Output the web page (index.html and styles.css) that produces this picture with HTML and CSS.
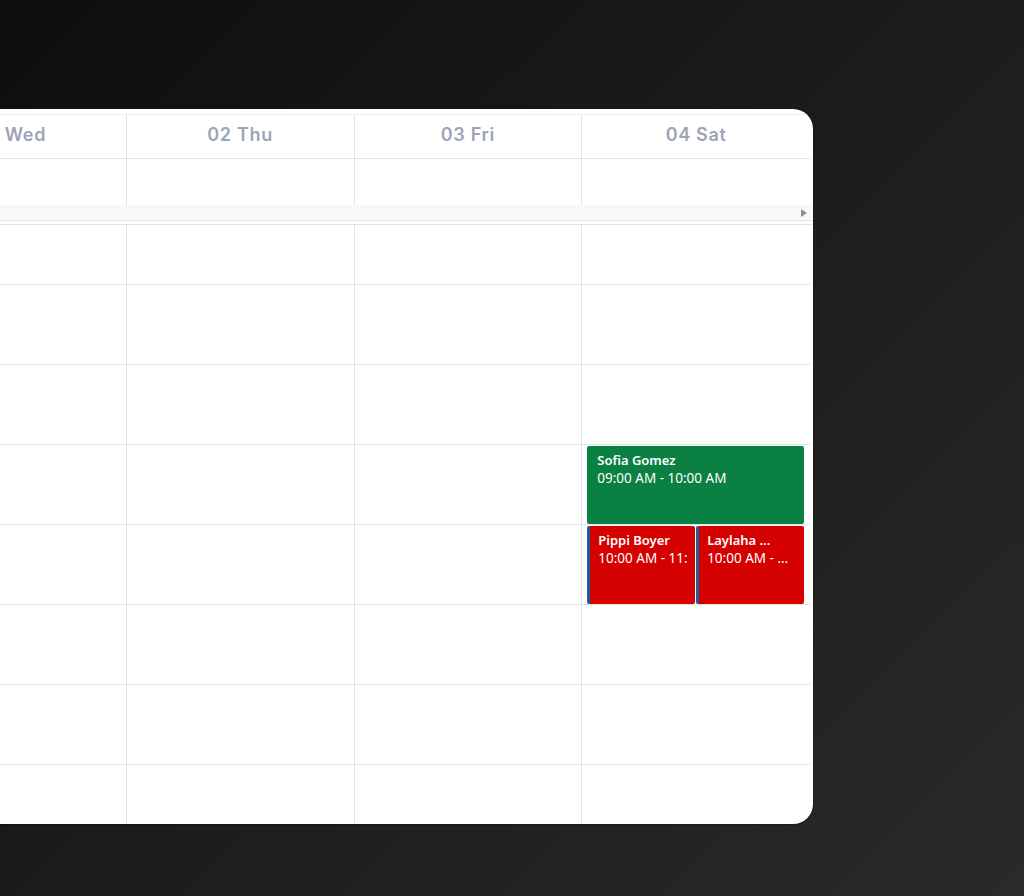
FILE: index.html
```html
<!DOCTYPE html>
<html lang="en">
<head>
    <meta charset="UTF-8">
    <meta name="viewport" content="width=device-width, initial-scale=1.0">
    <title>Week schedule</title>
    <link rel="stylesheet" href="styles.css">
</head>
<body>

    <div class="stage">
        <div class="calendar">
            <!-- day headers -->
            <div class="row head">
                <div class="cell">01 Wed</div>
                <div class="cell">02 Thu</div>
                <div class="cell">03 Fri</div>
                <div class="cell">04 Sat</div>
            </div>
            <div class="row allday">
                <div class="cell"></div>
                <div class="cell"></div>
                <div class="cell"></div>
                <div class="cell"></div>
            </div>
            <div class="hscroll"><span class="arrow"></span></div>

            <div class="body">
                <div class="grid">
                    <div class="row slot">
                        <div class="cell"></div><div class="cell"></div><div class="cell"></div><div class="cell"></div>
                    </div>
                    <div class="row slot">
                        <div class="cell"></div><div class="cell"></div><div class="cell"></div><div class="cell"></div>
                    </div>
                    <div class="row slot">
                        <div class="cell"></div><div class="cell"></div><div class="cell"></div><div class="cell"></div>
                    </div>
                    <div class="row slot">
                        <div class="cell"></div><div class="cell"></div><div class="cell"></div>
                        <div class="cell events">
                            <div class="event green">
                                <div class="title">Sofia Gomez</div>
                                <div class="time">09:00 AM - 10:00 AM</div>
                            </div>
                        </div>
                    </div>
                    <div class="row slot">
                        <div class="cell"></div><div class="cell"></div><div class="cell"></div>
                        <div class="cell events">
                            <div class="event red">
                                <div class="title">Pippi Boyer</div>
                                <div class="time">10:00 AM - 11:00 AM</div>
                            </div>
                            <div class="event red">
                                <div class="title">Laylaha ...</div>
                                <div class="time">10:00 AM - ...</div>
                            </div>
                        </div>
                    </div>
                    <div class="row slot">
                        <div class="cell"></div><div class="cell"></div><div class="cell"></div><div class="cell"></div>
                    </div>
                    <div class="row slot">
                        <div class="cell"></div><div class="cell"></div><div class="cell"></div><div class="cell"></div>
                    </div>
                    <div class="row slot">
                        <div class="cell"></div><div class="cell"></div><div class="cell"></div><div class="cell"></div>
                    </div>
                </div>
            </div>
        </div>
    </div>

</body>
</html>
```

FILE: styles.css
```css
* {
    box-sizing: border-box;
}
body {
    margin: 0;
    height: 896px;
    overflow: hidden;
    background: linear-gradient(135deg, #0e0e0e 0%, #1c1c1c 50%, #2a2a2a 100%);
    font-family: "Noto Sans", "Liberation Sans", sans-serif;
}
.stage {
    padding-top: 109px;
}
.calendar {
    margin-left: -101px;
    width: 914px;
    height: 715px;
    padding-top: 5px;
    background: #fff;
    border-radius: 0 20px 20px 0;
    overflow: hidden;
    box-shadow: 0 1px 2px rgba(0, 0, 0, 0.3);
}
.row {
    display: grid;
    grid-template-columns: repeat(4, 227.75px);
}
.cell {
    border-right: 1px solid #e3e3e3;
}
.cell:last-child {
    border-right: none;
}
.head {
    height: 45px;
    border-top: 1px solid #ececec;
    border-bottom: 1px solid #e3e3e3;
    width: 911px;
}
.head .cell {
    display: flex;
    align-items: center;
    justify-content: center;
    padding-bottom: 4px;
    font-family: Inter, "Liberation Sans", sans-serif;
    font-size: 18px;
    font-weight: 600;
    letter-spacing: 0.7px;
    color: #9ca5b6;
}
.allday {
    height: 46px;
}
.hscroll {
    height: 16px;
    background: #f8f8f8;
    border-bottom: 1px solid #e2e2e2;
    display: flex;
    align-items: center;
    justify-content: flex-end;
    padding-right: 6px;
}
.arrow {
    width: 0;
    height: 0;
    border-top: 4px solid transparent;
    border-bottom: 4px solid transparent;
    border-left: 6px solid #8f8f8f;
}
.body {
    margin-top: 3px;
    height: 600px;
    border-top: 1px solid #e2e2e2;
    overflow: hidden;
}
.grid {
    margin-top: -20px;
}
.slot {
    height: 80px;
    width: 911px;
}
.slot .cell {
    border-bottom: 1px solid #e3e3e3;
}
.events {
    display: flex;
    gap: 1px;
    padding: 1px 6px 0 5px;
}
.event {
    flex: 1;
    min-width: 0;
    border-radius: 2px;
    padding: 5px 8px;
    color: #fff;
    font-size: 13.5px;
    line-height: 18px;
    overflow: hidden;
}
.event .title {
    font-size: 13px;
    font-weight: 600;
    white-space: nowrap;
}
.event .time {
    white-space: nowrap;
    overflow: hidden;
}
.green {
    background: #0b8043;
    padding-left: 10px;
}
.red {
    background: #d50000;
    border-left: 3px solid #1b5e9e;
}
```
